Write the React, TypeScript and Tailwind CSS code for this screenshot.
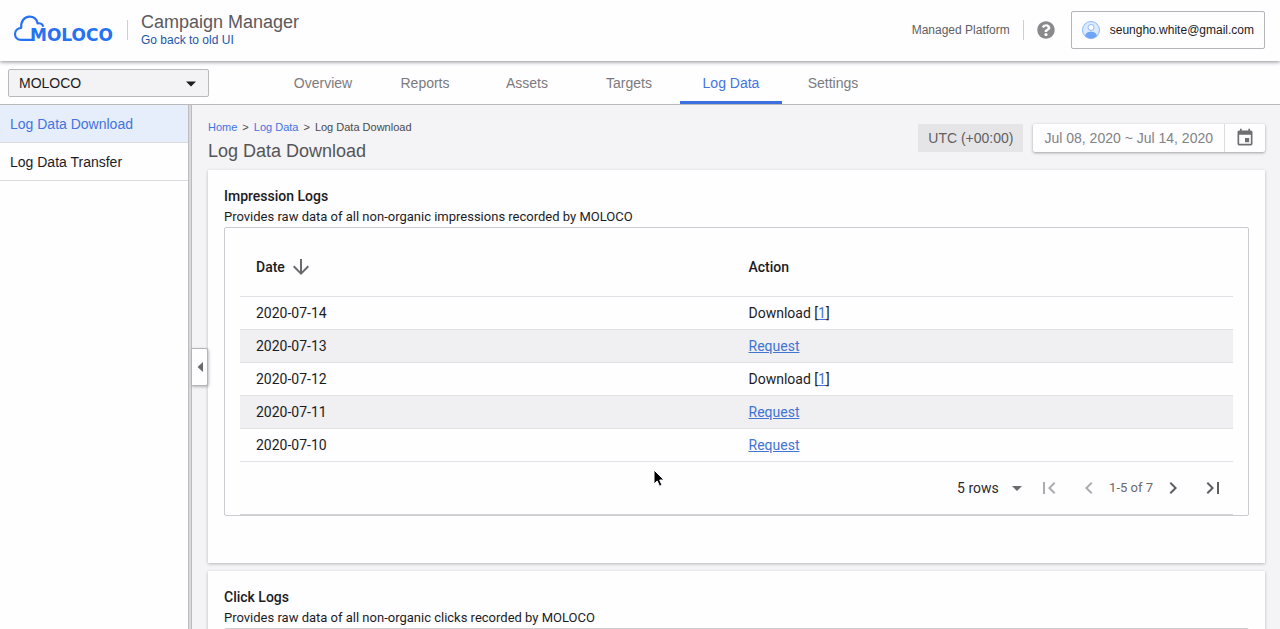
import { FaQuestionCircle } from "react-icons/fa";
import { MdEvent, MdArrowDownward, MdArrowDropDown, MdFirstPage, MdLastPage, MdChevronLeft, MdChevronRight } from "react-icons/md";

const tabs = ["Overview", "Reports", "Assets", "Targets", "Log Data", "Settings"];

type LogRow = { date: string; ready: boolean };

const impressionRows: LogRow[] = [
  { date: "2020-07-14", ready: true },
  { date: "2020-07-13", ready: false },
  { date: "2020-07-12", ready: true },
  { date: "2020-07-11", ready: false },
  { date: "2020-07-10", ready: false },
];

function Logo() {
  return (
    <svg width="102" height="30" viewBox="0 0 102 30" role="img" aria-label="MOLOCO">
      <path
        d="M19.500 24.900H8C4.300 24.900 2 22.200 2 19C2 15.500 4.600 13 8.200 12.800C7.600 6.300 11.400 1.600 16.500 1.600C20.700 1.600 23.800 4.300 24.600 8.400C27.500 7.800 29.800 9.200 30.300 11.800"
        fill="none"
        stroke="#2672f2"
        strokeWidth="2.200"
        strokeLinejoin="round"
      />
      <text x="17" y="26" fill="#2672f2" className="font-['DejaVu_Sans',sans-serif] text-[17px] font-bold">
        MOLOCO
      </text>
    </svg>
  );
}

function Avatar() {
  return (
    <svg width="18" height="18" viewBox="0 0 18 18" aria-hidden="true">
      <circle cx="9" cy="9" r="8.500" fill="#dceafd" stroke="#8db8f4" />
      <path d="M3.200 15C3.500 12 6 10.800 9 10.800S14.500 12 14.800 15C13.500 16.500 11.500 17.500 9 17.500S4.500 16.500 3.200 15Z" fill="#6fa5f5" />
      <circle cx="9" cy="6.500" r="3" fill="#fff" stroke="#8db8f4" />
    </svg>
  );
}

function Header() {
  return (
    <header className="relative z-20 flex h-[61px] shrink-0 items-center bg-[#fefdff] pr-[15px] pb-px pl-[13px] shadow-[0_1px_4px_rgba(0,0,0,0.45)]">
      <Logo />
      <div className="ml-3 h-5 w-px bg-[#cfcfd1]" />
      <div className="ml-[13px]">
        <div className="text-lg leading-5 text-[#5a5a5c]">Campaign Manager</div>
        <a href="#old" className="block text-xs leading-4 text-[#1d56a5]">Go back to old UI</a>
      </div>
      <div className="ml-auto flex items-center">
        <span className="text-xs text-[#5f5f61]">Managed Platform</span>
        <div className="ml-[13px] h-5 w-px bg-[#cfcfd1]" />
        <button aria-label="Help" className="ml-[13px] text-[#8a8a8c]">
          <FaQuestionCircle size={18} />
        </button>
        <button className="ml-4 flex h-[38px] items-center gap-[10px] rounded-xs border border-[#b4b4b6] px-[10px] text-xs text-[#1c1c1e]">
          <Avatar />
          seungho.white@gmail.com
        </button>
      </div>
    </header>
  );
}

function NavBar() {
  return (
    <div className="flex h-11 shrink-0 border-b border-[#b9b8bb] bg-[#fefdff] pl-2">
      <div className="relative mt-2 h-7 w-[201px]">
        <select aria-label="Workplace" className="h-full w-full appearance-none rounded-xs border border-[#b9b8bb] bg-[#f3f2f4] pl-[10px] text-sm text-[#1c1c1e]">
          <option>MOLOCO</option>
        </select>
        <svg width="12" height="6" viewBox="0 0 12 6" className="pointer-events-none absolute top-3 right-3" aria-hidden="true">
          <path d="M1 0.500H11L6 5.500Z" fill="#1c1c1e" />
        </svg>
      </div>
      <nav className="ml-[63px] flex">
        {tabs.map((tab) => (
          <a
            key={tab}
            href={"#" + tab}
            className={
              tab === "Log Data"
                ? "flex w-[102px] items-center justify-center border-y-3 border-t-transparent border-b-[#3c6fe0] text-sm text-[#4274e2]"
                : "flex w-[102px] items-center justify-center border-y-3 border-transparent text-sm text-[#7b7b7d]"
            }
          >
            {tab}
          </a>
        ))}
      </nav>
    </div>
  );
}

function Sidebar() {
  return (
    <aside className="w-[188px] shrink-0 bg-[#fefdff] text-sm">
      <a href="#download" className="flex h-[38px] items-center border-b border-[#dcdcdf] bg-[#e7eefb] px-[10px] text-[#4274e2]">
        Log Data Download
      </a>
      <a href="#transfer" className="flex h-[38px] items-center border-b border-[#dcdcdf] px-[10px] text-[#1c1c1e]">
        Log Data Transfer
      </a>
    </aside>
  );
}

function Pager() {
  return (
    <div className="flex h-[53px] items-center justify-end border-b border-[#d4d4d7] pr-2">
      <div className="relative">
        <select aria-label="Rows per page" className="h-8 w-[68px] appearance-none bg-transparent text-sm text-[#2a2a2c]">
          <option>5 rows</option>
        </select>
        <MdArrowDropDown size={24} className="pointer-events-none absolute top-1 right-[-4px] text-[#6a6a6c]" />
      </div>
      <button aria-label="First page" disabled className="ml-3 text-[#acacae]"><MdFirstPage size={24} /></button>
      <button aria-label="Previous page" disabled className="ml-4 text-[#acacae]"><MdChevronLeft size={24} /></button>
      <span className="ml-2 text-[13px] text-[#6a6a6c]">1-5 of 7</span>
      <button aria-label="Next page" className="ml-2 text-[#5f5f61]"><MdChevronRight size={24} /></button>
      <button aria-label="Last page" className="ml-4 text-[#5f5f61]"><MdLastPage size={24} /></button>
    </div>
  );
}

function LogTable({ rows }: { rows: LogRow[] }) {
  return (
    <>
      <table className="w-full table-fixed text-left text-sm">
        <thead>
          <tr className="h-[53px] border-b border-[#e1e1e3]">
            <th className="w-1/2 pb-1 pl-4 font-medium">
              <button className="flex items-center gap-1">
                Date
                <MdArrowDownward size={24} className="text-[#6a6a6c]" />
              </button>
            </th>
            <th className="pb-1 pl-3 font-medium">Action</th>
          </tr>
        </thead>
        <tbody>
          {rows.map((row) => (
            <tr key={row.date} className="h-[33px] border-b border-[#e1e1e3] even:bg-[#f0eff1]">
              <td className="pl-4">{row.date}</td>
              <td className="pl-3">
                {row.ready ? (
                  <>
                    Download [<a href={"#" + row.date} className="text-[#4274d2] underline">1</a>]
                  </>
                ) : (
                  <a href={"#" + row.date} className="text-[#4274d2] underline">Request</a>
                )}
              </td>
            </tr>
          ))}
        </tbody>
      </table>
      <Pager />
    </>
  );
}

function LogCard({ title, description, rows }: { title: string; description: string; rows: LogRow[] }) {
  return (
    <section className="bg-[#fefdff] px-4 pt-4 pb-[47px] font-['Roboto',sans-serif] text-[#1c1c1e] shadow-[0_1px_3px_rgba(0,0,0,0.25)]">
      <h2 className="text-sm leading-[21px] font-medium">{title}</h2>
      <p className="text-[13px] leading-5">{description}</p>
      <div className="min-h-16 rounded-xs border border-[#cbcbd0] px-[15px] pt-[15px]">
        {rows.length > 0 && <LogTable rows={rows} />}
      </div>
    </section>
  );
}

function PageHeading() {
  return (
    <div className="flex items-start justify-between">
      <div>
        <div className="flex gap-[5px] pt-[15px] text-[11px] leading-[14px] text-[#4a4a4c]">
          <a href="#home" className="text-[#4274e2]">Home</a>
          <span>&gt;</span>
          <a href="#logs" className="text-[#4274e2]">Log Data</a>
          <span>&gt;</span>
          <span>Log Data Download</span>
        </div>
        <h1 className="pt-1 text-lg leading-[26px] text-[#555557]">Log Data Download</h1>
      </div>
      <div className="mt-[19px] flex h-7 gap-[10px] text-sm">
        <div className="flex items-center bg-[#e5e5e7] px-[10px] text-[#5f5f61]">UTC (+00:00)</div>
        <div className="flex rounded-xs bg-[#fefdff] shadow-[0_1px_3px_rgba(0,0,0,0.35)]">
          <button className="border-r border-[#dcdcdf] px-[11px] text-[#828284]">Jul 08, 2020 ~ Jul 14, 2020</button>
          <button aria-label="Open calendar" className="flex w-10 items-center justify-center text-[#6f6f71]">
            <MdEvent size={20} />
          </button>
        </div>
      </div>
    </div>
  );
}

export default function App() {
  return (
    <div className="flex h-screen flex-col overflow-hidden bg-[#f4f3f5] font-['Liberation_Sans',Arial,sans-serif]">
      <Header />
      <NavBar />
      <div className="relative flex min-h-0 grow">
        <Sidebar />
        <div className="w-1 shrink-0 border-x border-[#bcbcbe] bg-[#d9d9dc]" />
        <button
          aria-label="Collapse sidebar"
          className="absolute top-1/2 left-[191px] z-10 flex h-[38px] w-[17px] -translate-y-1/2 items-center justify-center rounded-r-xs border border-[#b4b4b6] bg-[#fefdff] shadow-[1px_1px_3px_rgba(0,0,0,0.25)]"
        >
          <svg width="6" height="10" viewBox="0 0 6 10" aria-hidden="true">
            <path d="M6 0V10L0.500 5Z" fill="#6a6a6c" />
          </svg>
        </button>
        <main className="min-w-0 grow overflow-y-auto pr-[15px] pb-4 pl-4 [scrollbar-width:none]">
          <PageHeading />
          <div className="mt-[6px] flex flex-col gap-2">
            <LogCard title="Impression Logs" description="Provides raw data of all non-organic impressions recorded by MOLOCO" rows={impressionRows} />
            <LogCard title="Click Logs" description="Provides raw data of all non-organic clicks recorded by MOLOCO" rows={[]} />
          </div>
        </main>
      </div>
      <svg width="14" height="20" viewBox="0 0 14 20" className="pointer-events-none absolute top-[469px] left-[652px] z-30" aria-hidden="true">
        <path d="M2 1V15L5.200 12L7.500 17.200L10 16.200L7.700 11H12Z" fill="#000" stroke="#fff" strokeWidth="1" />
      </svg>
    </div>
  );
}
